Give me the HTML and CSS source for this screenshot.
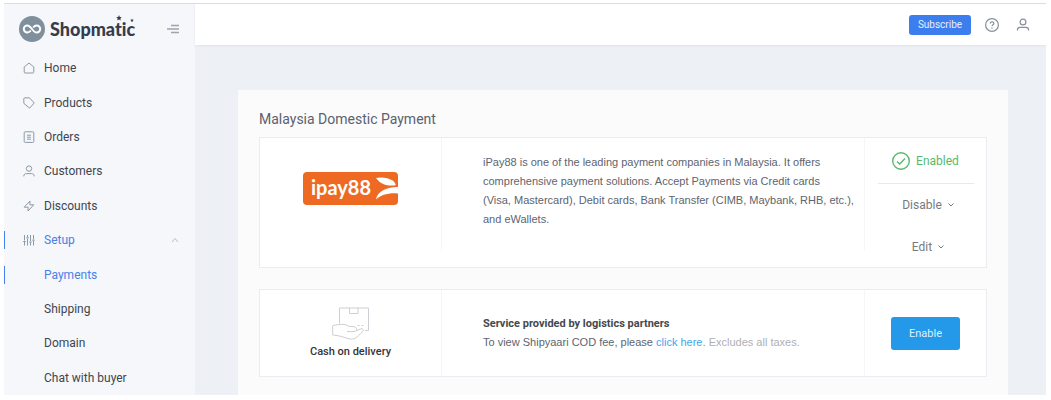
FILE: index.html
```html
<!DOCTYPE html>
<html lang="en">
<head>
    <meta charset="UTF-8">
    <meta name="viewport" content="width=device-width, initial-scale=1.0">
    <title>Shopmatic - Payments</title>
    <link rel="stylesheet" href="styles.css">
</head>
<body>

    <div class="app">
        <aside class="sidebar">
            <div class="brand">
                <svg class="brand-mark" viewBox="0 0 26 26">
                    <circle cx="13" cy="13" r="13" fill="#7f8f9c"/>
                    <path d="M11.800 14.500C10.800 15.800 10 16.600 8.400 16.600a3.600 3.600 0 0 1 0-7.200c3.600 0 5.600 7.200 9.200 7.200a3.600 3.600 0 0 0 0-7.200c-1.600 0-2.400.8-3.400 2.100" fill="none" stroke="#fff" stroke-width="2"/>
                </svg>
                <span class="brand-name">Shopmatic
                    <svg class="brand-stars" viewBox="0 0 18 7">
                        <path d="M3 0l.8 1.900 2 .2-1.500 1.300.5 2L3 4.400 1.200 5.400l.5-2L.2 2.100l2-.2z"/>
                        <path d="M16 3.500l.5 1.200 1.300.1-1 .9.300 1.200-1.100-.6-1.100.6.300-1.200-1-.9 1.300-.1z"/>
                    </svg>
                </span>
                <button class="collapse" type="button" aria-label="Collapse menu">
                    <svg viewBox="0 0 12 10"><path d="M4 1.500h8M0 5h12M4 8.500h8"/></svg>
                </button>
            </div>

            <nav class="menu">
                <a class="menu-item" href="#">
                    <svg viewBox="0 0 12 12"><path d="M1.200 10V5L6 1l4.800 4v5a1 1 0 0 1-1 1H2.200a1 1 0 0 1-1-1z"/></svg>
                    Home
                </a>
                <a class="menu-item" href="#">
                    <svg viewBox="0 0 12 12"><path d="M.8 1.800a1 1 0 0 1 1-1H6.500L11.200 6 6.600 11.200.8 6.300z"/></svg>
                    Products
                </a>
                <a class="menu-item" href="#">
                    <svg viewBox="0 0 12 12"><rect x="1.200" y=".8" width="9.600" height="10.600" rx="1"/><path d="M4 4.200h4M4 6.200h4M4 8.200h4"/></svg>
                    Orders
                </a>
                <a class="menu-item" href="#">
                    <svg viewBox="0 0 12 12"><circle cx="6" cy="3.600" r="2.700"/><path d="M.8 11.400V11c0-1.600 1.200-2.400 2.600-2.400h5.200c1.400 0 2.600.8 2.600 2.400v.4"/></svg>
                    Customers
                </a>
                <a class="menu-item" href="#">
                    <svg viewBox="0 0 12 12"><path d="M7 1L1.200 7.200h4L5 11l5.800-6.200h-4z"/></svg>
                    Discounts
                </a>
                <a class="menu-item active" href="#">
                    <svg viewBox="0 0 12 12"><path d="M1.500 1v5.500M1.500 8v3.500M4.500 1v2M4.500 4.500v7M7.500 1v6M7.500 8.500v3M10.500 1v4.500M10.500 7v4.500M.2 7.500h2.600M3.200 3.800h2.600M6.200 8h2.600M9.200 6.200h2.600"/></svg>
                    Setup
                    <svg class="caret" viewBox="0 0 8 6"><path d="M1 5l3-3.500L7 5"/></svg>
                </a>
                <a class="menu-item sub active" href="#">Payments</a>
                <a class="menu-item sub" href="#">Shipping</a>
                <a class="menu-item sub" href="#">Domain</a>
                <a class="menu-item sub" href="#">Chat with buyer</a>
            </nav>
        </aside>

        <div class="main">
            <header class="topbar">
                <button class="subscribe" type="button">Subscribe</button>
                <button class="icon-btn" type="button" aria-label="Help">
                    <svg viewBox="0 0 14 14"><circle cx="7" cy="7" r="6.400"/><path d="M5.200 5.600c0-2.400 3.700-2.300 3.700-.1C8.900 6.900 7 6.800 7 8.300M7 9.500v1.200"/></svg>
                </button>
                <button class="icon-btn" type="button" aria-label="Account">
                    <svg viewBox="0 0 14 14"><circle cx="7" cy="4" r="2.900"/><path d="M1.400 12.600v-.6c0-1.900 1.200-2.700 2.800-2.700h5.600c1.600 0 2.800.8 2.800 2.700v.6"/></svg>
                </button>
            </header>

            <main class="content">
                <h1>Malaysia Domestic Payment</h1>

                <section class="card card-ipay">
                    <div class="provider">
                        <div class="ipay-logo">
                            <span>ipay88</span>
                            <svg viewBox="0 0 22 24">
                                <path d="M0 1c5.500-1.200 12-.4 16.500 2.600 2 1.400 3 3 3.200 4.600C13 9.200 5.500 8.500 0 1z"/>
                                <path d="M0 22.500C1.500 15 8 10.500 22 10v6.500C12 15.800 5 18 0 22.500z"/>
                            </svg>
                        </div>
                    </div>
                    <p class="description">iPay88 is one of the leading payment companies in Malaysia. It offers<br>comprehensive payment solutions. Accept Payments via Credit cards<br>(Visa, Mastercard), Debit cards, Bank Transfer (CIMB, Maybank, RHB, etc.),<br>and eWallets.</p>
                    <div class="actions">
                        <div class="status">
                            <svg viewBox="0 0 18 18"><circle cx="9" cy="9" r="8.300"/><path d="M5 9.400l2.700 2.500L13 6.500"/></svg>
                            Enabled
                        </div>
                        <button class="action" type="button">Disable <svg viewBox="0 0 6 4"><path d="M.5.500L3 3 5.500.500"/></svg></button>
                        <button class="action" type="button">Edit <svg viewBox="0 0 6 4"><path d="M.5.500L3 3 5.500.500"/></svg></button>
                    </div>
                </section>

                <section class="card card-cod">
                    <div class="provider">
                        <svg class="cod-icon" viewBox="0 0 38 34">
                            <path d="M7.500 16.500V1h29v22.500H33M17.500 1v5.500H26V1M25.500 18.500h2M29.500 18.500h2"/>
                            <path d="M.7 28V18.700C5 17.600 9 17 13 17.500l4 1.800 5 .4c3 .5 3.500 4 1 4.600-2.500.5-5 .4-8 .2M24 23.800l5-2c2-.4 2.800 1 1.800 2.500-3 3-5 5.700-8 7.200-3 .9-5 .6-8-.3C11 30 7 28.500.7 28"/>
                        </svg>
                        <h2>Cash on delivery</h2>
                    </div>
                    <div class="description">
                        <h3>Service provided by logistics partners</h3>
                        <p>To view Shipyaari COD fee, please <a href="#">click here.</a> <span class="note">Excludes all taxes.</span></p>
                    </div>
                    <div class="actions">
                        <button class="enable" type="button">Enable</button>
                    </div>
                </section>
            </main>
        </div>
    </div>

</body>
</html>
```
FILE: styles.css
```css
* {
    box-sizing: border-box;
}
body {
    margin: 3px 5px 5px 4px;
    font-family: Roboto, sans-serif;
    font-size: 12px;
    color: #5d6470;
    background: #fff;
}
h1, h2, h3, p {
    margin: 0;
}
button {
    font-family: inherit;
    border: none;
    background: none;
    padding: 0;
    cursor: pointer;
}
svg {
    display: block;
    flex: none;
}
.app {
    display: flex;
    min-height: calc(100vh - 8px);
    border-top: 1px solid #dcdde0;
    background: #edf1f6;
}

/* sidebar */
.sidebar {
    display: flex;
    flex-direction: column;
    width: 191px;
    background: #f5f7fb;
}
.brand {
    display: flex;
    align-items: center;
    height: 47px;
    padding: 2px 16px 0 15px;
}
.brand-mark {
    width: 26px;
    height: 26px;
}
.brand-name {
    position: relative;
    margin-left: 5px;
    font-family: Lato, sans-serif;
    font-size: 18px;
    font-weight: 900;
    font-variant-ligatures: none;
    color: #363c4b;
}
.brand-stars {
    position: absolute;
    top: -3px;
    right: 1px;
    width: 18px;
    height: 7px;
    fill: #363c4b;
}
.collapse {
    margin-left: auto;
}
.collapse svg {
    width: 12px;
    height: 10px;
    stroke: #9aa5b1;
    stroke-width: 1.500;
}
.menu {
    display: flex;
    flex: 1;
    flex-direction: column;
}
.menu-item {
    display: flex;
    flex: 1;
    align-items: center;
    position: relative;
    gap: 9px;
    padding: 0 16px 0 19px;
    color: #40464f;
    text-decoration: none;
}
.menu-item svg {
    width: 12px;
    height: 12px;
    fill: none;
    stroke: #8e99a6;
}
.menu-item.sub {
    padding-left: 40px;
}
.menu-item.active {
    color: #4680ea;
}
.menu-item.active::before {
    content: "";
    position: absolute;
    left: 0;
    width: 1px;
    height: 18px;
    background: #4680ea;
}
.menu-item .caret {
    width: 8px;
    height: 6px;
    margin-left: auto;
    stroke: #b9c0c9;
}

/* main area */
.main {
    flex: 1;
}
.topbar {
    display: flex;
    align-items: center;
    justify-content: flex-end;
    gap: 17px;
    height: 41px;
    padding-right: 16px;
    background: #fff;
    box-shadow: 0 1px 2px #dfe3e9;
}
.subscribe {
    width: 62px;
    height: 20px;
    margin-right: -3px;
    border-radius: 3px;
    font-size: 10px;
    color: #e6efff;
    background: #3d7eee;
}
.icon-btn svg {
    width: 14px;
    height: 14px;
    fill: none;
    stroke: #89909b;
    stroke-width: 1.200;
}
.content {
    min-height: 305px;
    margin: 45px 38px 0 43px;
    padding: 20px 21px 0;
    background: #fbfbfb;
}
h1 {
    margin-bottom: 8px;
    font-size: 14px;
    font-weight: 400;
    line-height: 19px;
    color: #5a6170;
}
.card {
    display: grid;
    grid-template-columns: minmax(0, 182fr) minmax(0, 423fr) 121px;
    border: 1px solid #e9ecf0;
    background: #fff;
}
.card-ipay {
    height: 131px;
    margin-bottom: 21px;
}
.card-cod {
    height: 88px;
}
.provider {
    display: flex;
    flex-direction: column;
    align-items: center;
    border-right: 1px solid #f5f6f8;
}
.card-ipay .provider,
.card-ipay .description {
    height: 113px;
}
.ipay-logo {
    display: flex;
    align-items: center;
    justify-content: space-between;
    width: 95px;
    height: 33px;
    margin-top: 34px;
    padding-left: 8px;
    border-radius: 4px;
    font-family: Lato, sans-serif;
    font-size: 20px;
    font-weight: 700;
    line-height: 30px;
    color: #fff;
    background: #ee6a23;
}
.ipay-logo span {
    padding-bottom: 3px;
}
.ipay-logo svg {
    width: 22px;
    height: 24px;
    fill: #fff;
}
.description {
    padding: 15px 0 0 41px;
    border-right: 1px solid #f5f6f8;
    font-family: "Liberation Sans", sans-serif;
    font-size: 11px;
    line-height: 19px;
}
.card-cod .description {
    padding-top: 24px;
}
.description h3 {
    font-family: Roboto, sans-serif;
    font-size: 11px;
    font-weight: 700;
    color: #45484d;
}
.description a {
    color: #43a5ed;
    text-decoration: none;
}
.note {
    color: #adb0b4;
}
.actions {
    display: flex;
    flex-direction: column;
    align-items: center;
}
.status {
    display: flex;
    align-items: center;
    justify-content: center;
    gap: 6px;
    width: 96px;
    height: 46px;
    border-bottom: 1px solid #e7e8ea;
    color: #58b96d;
}
.status svg {
    width: 18px;
    height: 18px;
    fill: none;
    stroke: #58b96d;
    stroke-width: 1.400;
}
.action {
    display: flex;
    align-items: center;
    gap: 6px;
    height: 42px;
    padding-left: 5px;
    font-size: 12px;
    color: #777b80;
}
.action svg {
    width: 6px;
    height: 4px;
    fill: none;
    stroke: #777b80;
}
.cod-icon {
    width: 38px;
    height: 34px;
    margin-top: 17px;
    fill: none;
    stroke: #cccfd3;
}
h2 {
    margin-top: 2px;
    font-size: 11px;
    font-weight: 500;
    line-height: 18px;
    color: #33363a;
}
.enable {
    width: 69px;
    height: 33px;
    margin-top: 27px;
    border-radius: 3px;
    font-size: 11px;
    color: #dff1ff;
    background: #2499e9;
}
```
